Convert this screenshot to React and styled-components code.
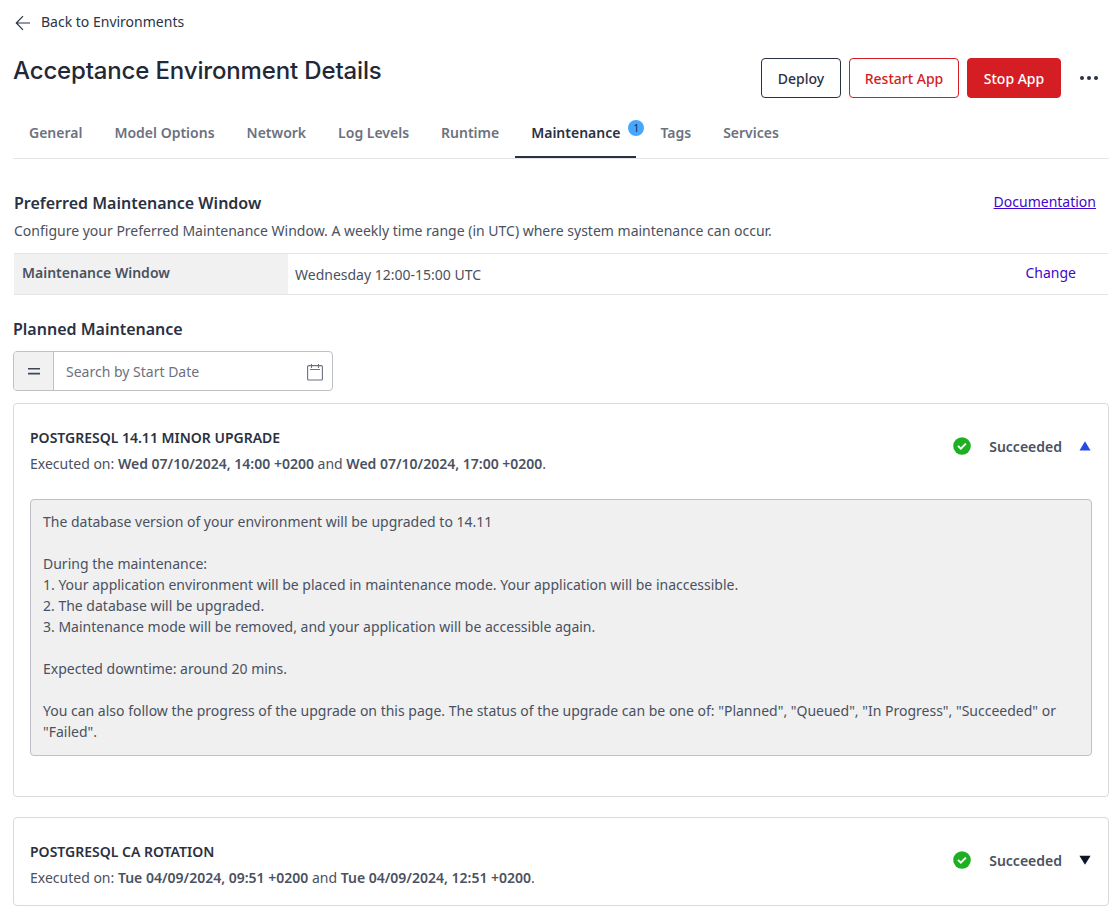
import React from "react";
import styled, { createGlobalStyle } from "styled-components";

const GlobalStyle = createGlobalStyle`
  *, *::before, *::after { box-sizing: border-box; }
  body {
    margin: 0;
    background: #fff;
    color: #4a5160;
    font: 400 14px/21px "Noto Sans", sans-serif;
  }
  p, h1, h2, h3 { margin: 0; }
`;

const Page = styled.main`
  display: flex;
  flex-direction: column;
  min-height: 915px;
  padding: 11px 8px 8px 13px;
`;

const BackLink = styled.a`
  display: flex;
  align-items: center;
  gap: 10px;
  height: 21px;
  padding-left: 2px;
  color: #2a3444;
  svg { margin-top: 3px; }
`;

const Header = styled.header`
  display: flex;
  justify-content: space-between;
  height: 40px;
  margin-top: 26px;
`;

const Title = styled.h1`
  color: #1f2938;
  font: 500 24px/26px Inter, sans-serif;
  letter-spacing: -0.15px;
`;

const Actions = styled.div`
  display: flex;
  align-items: center;
  gap: 8px;
`;

const variants = {
  neutral: "color: #2a3142; border-color: #2a3142; background: #fff;",
  outline: "color: #d21d24; border-color: #d21d24; background: #fff;",
  danger: "color: #fff; border-color: #d41e24; background: #d41e24;",
};

const Button = styled.button`
  width: ${(p) => p.$width}px;
  height: 40px;
  padding: 0;
  border: 1px solid;
  border-radius: 4px;
  font: 500 14px/21px "Noto Sans", sans-serif;
  ${(p) => variants[p.$variant]}
`;

const MoreButton = styled.button`
  display: flex;
  align-items: center;
  justify-content: center;
  width: 40px;
  height: 40px;
  padding: 0;
  border: 0;
  background: none;
`;

const Tabs = styled.nav`
  display: flex;
  height: 61px;
  border-bottom: 1px solid #e4e5e6;
`;

const Tab = styled.a`
  position: relative;
  height: 60px;
  padding: 24px 16px 0;
  margin-right: ${(p) => (p.$active ? 8 : 0)}px;
  border-bottom: ${(p) => (p.$active ? "2px solid #2a3142" : "0")};
  color: ${(p) => (p.$active ? "#2a3142" : "#6c717e")};
  font-weight: 600;
`;

const TabBadge = styled.span`
  position: absolute;
  top: 22px;
  right: -8px;
  width: 16px;
  height: 16px;
  border-radius: 50%;
  background: #47a7ff;
  color: #14263c;
  font-size: 10px;
  font-weight: 400;
  line-height: 16px;
  text-align: center;
`;

const SectionHead = styled.div`
  display: flex;
  justify-content: space-between;
  align-items: flex-start;
  margin-top: 32px;
  padding: 0 13px 0 1px;
`;

const SectionTitle = styled.h2`
  color: #2a3142;
  font-size: 16px;
  font-weight: 600;
  line-height: 24px;
`;

const Link = styled.a`
  color: #4306ca;
  text-decoration: ${(p) => (p.$underlined ? "underline" : "none")};
`;

const Intro = styled.p`
  margin: 5px 0 12px 1px;
`;

const SettingRow = styled.div`
  display: flex;
  height: 42px;
  margin: 0 1px;
  border: solid #e4e5e6;
  border-width: 1px 0;
`;

const SettingName = styled.div`
  width: 274px;
  padding: 8px;
  background: #f1f1f1;
  font-weight: 600;
`;

const SettingValue = styled.div`
  flex: 1;
  padding: 10px 7px;
`;

const SettingAction = styled.div`
  padding: 8px 32px 0 0;
`;

const PlannedTitle = styled(SectionTitle)`
  margin: 22px 0 10px;
`;

const SearchField = styled.div`
  display: flex;
  align-items: stretch;
  width: 320px;
  height: 40px;
  flex: none;
  border: 1px solid #bdc0c5;
  border-radius: 4px;
  overflow: hidden;
`;

const Operator = styled.div`
  display: flex;
  align-items: center;
  justify-content: center;
  width: 40px;
  border-right: 1px solid #bdc0c5;
  background: #f1f1f1;
`;

const Placeholder = styled.span`
  flex: 1;
  padding: 9px 12px;
  color: #6c717e;
`;

const CalendarSlot = styled.span`
  display: flex;
  align-items: center;
  padding: 1px 9px 0 0;
`;

const Card = styled.article`
  margin-top: ${(p) => p.$gap}px;
  height: ${(p) => p.$height}px;
  padding: 23px 16px 0;
  border: 1px solid #d8d9db;
  border-radius: 4px;
`;

const CardHead = styled.div`
  display: flex;
  justify-content: space-between;
`;

const CardTitle = styled.h3`
  color: #2a3142;
  font-size: 14px;
  font-weight: 600;
  line-height: 21px;
  margin-bottom: 5px;
`;

const Strong = styled.b`
  font-weight: 600;
`;

const Status = styled.div`
  display: flex;
  align-items: center;
  height: 18px;
  margin-top: 10px;
  padding-right: 1px;
`;

const StatusText = styled.span`
  margin: 0 17px 0 18px;
  font-weight: 600;
`;

const Details = styled.div`
  height: 257px;
  margin-top: 25px;
  padding: 11px 12px;
  border: 1px solid #bdc0c7;
  border-radius: 4px;
  background: #f0f0f0;
  white-space: pre-line;
`;

const TABS = ["General", "Model Options", "Network", "Log Levels", "Runtime", "Maintenance", "Tags", "Services"];

const UPGRADE_NOTES = `The database version of your environment will be upgraded to 14.11

During the maintenance:
1. Your application environment will be placed in maintenance mode. Your application will be inaccessible.
2. The database will be upgraded.
3. Maintenance mode will be removed, and your application will be accessible again.

Expected downtime: around 20 mins.

You can also follow the progress of the upgrade on this page. The status of the upgrade can be one of: "Planned", "Queued", "In Progress", "Succeeded" or "Failed".`;

const ArrowLeft = () => (
  <svg width="16" height="16" viewBox="0 0 16 16" fill="none" stroke="#2a3444" strokeWidth="1.2">
    <path d="M15 8H1.3M8 1.2 1.3 8 8 14.8" />
  </svg>
);

const Dots = () => (
  <svg width="20" height="6" viewBox="0 0 20 6" fill="#2a3142">
    <circle cx="3" cy="3" r="2" />
    <circle cx="10" cy="3" r="2" />
    <circle cx="17" cy="3" r="2" />
  </svg>
);

const EqualIcon = () => (
  <svg width="14" height="10" viewBox="0 0 14 10" fill="none" stroke="#3f4657" strokeWidth="1.6">
    <path d="M1 2.8h12M1 7.6h12" />
  </svg>
);

const CalendarIcon = () => (
  <svg width="16" height="18" viewBox="0 0 16 18" fill="none" stroke="#6c717e" strokeWidth="1.1">
    <rect x=".6" y="2.6" width="14.8" height="14.4" rx="1" />
    <path d="M4.5 1v4M11.5 1v4M3 6.5h10" />
  </svg>
);

const CheckIcon = () => (
  <svg width="18" height="18" viewBox="0 0 18 18" fill="none">
    <circle cx="9" cy="9" r="8.8" fill="#1eb022" />
    <path d="m5 8.9 2.8 2.7 5.1-5" stroke="#fff" strokeWidth="2" />
  </svg>
);

const Caret = ({ open }) => (
  <svg width="12" height="10" viewBox="0 0 12 10">
    {open ? <path d="M6 .3 11.5 9.5H.5Z" fill="#264ae5" /> : <path d="M.4.8h11.2L6 9.8Z" fill="#0b1626" />}
  </svg>
);

function MaintenanceCard({ title, from, to, notes, gap, height }) {
  return (
    <Card $gap={gap} $height={height}>
      <CardHead>
        <div>
          <CardTitle>{title}</CardTitle>
          <p>
            Executed on: <Strong>{from}</Strong> and <Strong>{to}</Strong>.
          </p>
        </div>
        <Status>
          <CheckIcon />
          <StatusText>Succeeded</StatusText>
          <Caret open={Boolean(notes)} />
        </Status>
      </CardHead>
      {notes && <Details>{notes}</Details>}
    </Card>
  );
}

export default function App() {
  return (
    <>
      <GlobalStyle />
      <Page>
        <BackLink>
          <ArrowLeft />
          Back to Environments
        </BackLink>
        <Header>
          <Title>Acceptance Environment Details</Title>
          <Actions>
            <Button $variant="neutral" $width={80}>Deploy</Button>
            <Button $variant="outline" $width={110}>Restart App</Button>
            <Button $variant="danger" $width={94}>Stop App</Button>
            <MoreButton aria-label="More actions">
              <Dots />
            </MoreButton>
          </Actions>
        </Header>
        <Tabs>
          {TABS.map((name) => (
            <Tab key={name} $active={name === "Maintenance"}>
              {name}
              {name === "Maintenance" && <TabBadge>1</TabBadge>}
            </Tab>
          ))}
        </Tabs>
        <SectionHead>
          <SectionTitle>Preferred Maintenance Window</SectionTitle>
          <Link $underlined>Documentation</Link>
        </SectionHead>
        <Intro>
          Configure your Preferred Maintenance Window. A weekly time range (in UTC) where system maintenance can occur.
        </Intro>
        <SettingRow>
          <SettingName>Maintenance Window</SettingName>
          <SettingValue>Wednesday 12:00-15:00 UTC</SettingValue>
          <SettingAction>
            <Link>Change</Link>
          </SettingAction>
        </SettingRow>
        <PlannedTitle>Planned Maintenance</PlannedTitle>
        <SearchField>
          <Operator>
            <EqualIcon />
          </Operator>
          <Placeholder>Search by Start Date</Placeholder>
          <CalendarSlot>
            <CalendarIcon />
          </CalendarSlot>
        </SearchField>
        <MaintenanceCard
          title="POSTGRESQL 14.11 MINOR UPGRADE"
          from="Wed 07/10/2024, 14:00 +0200"
          to="Wed 07/10/2024, 17:00 +0200"
          notes={UPGRADE_NOTES}
          gap={12}
          height={394}
        />
        <MaintenanceCard
          title="POSTGRESQL CA ROTATION"
          from="Tue 04/09/2024, 09:51 +0200"
          to="Tue 04/09/2024, 12:51 +0200"
          gap={20}
          height={89}
        />
      </Page>
    </>
  );
}
